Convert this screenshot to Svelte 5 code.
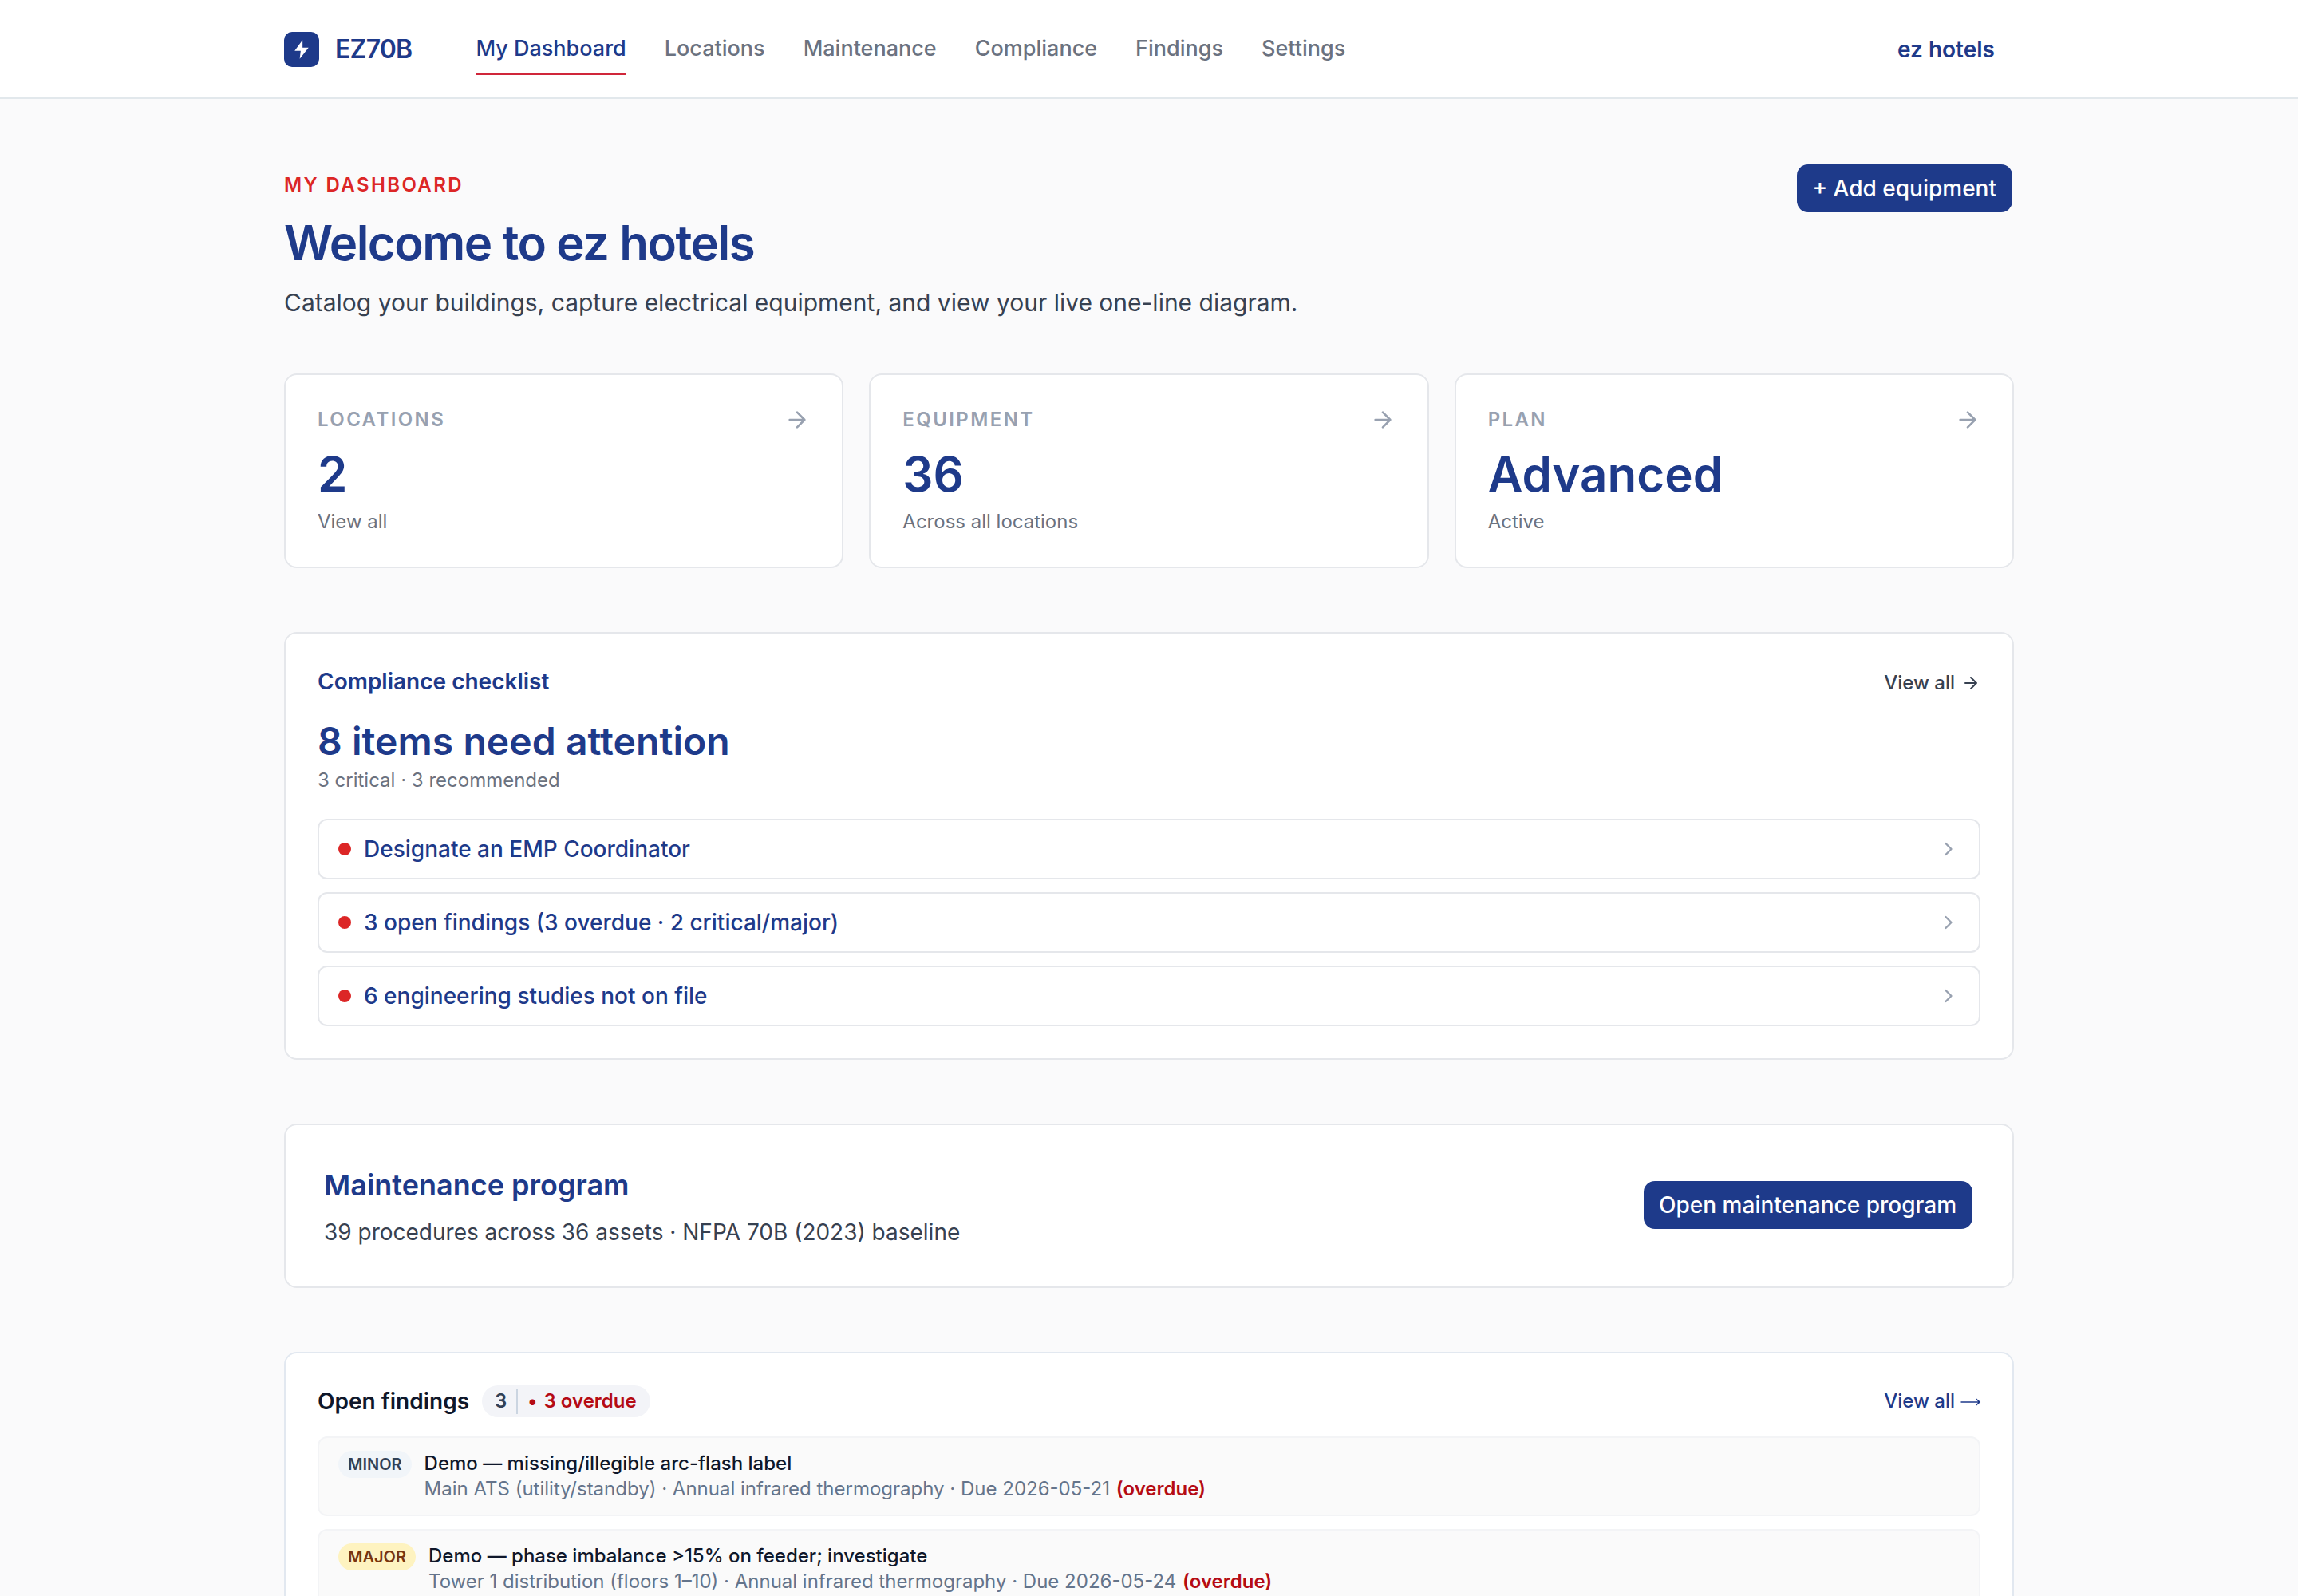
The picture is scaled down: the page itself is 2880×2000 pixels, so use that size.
<script>
  const nav = ["My Dashboard", "Locations", "Maintenance", "Compliance", "Findings", "Settings"];
  let active = $state("My Dashboard");

  const stats = [
    { label: "Locations", value: "2", note: "View all" },
    { label: "Equipment", value: "36", note: "Across all locations" },
    { label: "Plan", value: "Advanced", note: "Active" },
  ];

  const checklist = [
    "Designate an EMP Coordinator",
    "3 open findings (3 overdue · 2 critical/major)",
    "6 engineering studies not on file",
  ];

  const findings = [
    {
      severity: "minor",
      title: "Demo — missing/illegible arc-flash label",
      detail: "Main ATS (utility/standby) · Annual infrared thermography · Due 2026-05-21",
    },
    {
      severity: "major",
      title: "Demo — phase imbalance >15% on feeder; investigate",
      detail: "Tower 1 distribution (floors 1–10) · Annual infrared thermography · Due 2026-05-24",
    },
  ];
</script>

{#snippet arrow(size)}
  <svg class="icon" width={size} height={size} viewBox="0 0 24 24">
    <path d="M5 12h14M12 5l7 7-7 7" />
  </svg>
{/snippet}

<div class="app">
  <header>
    <div class="bar">
      <div class="brand">
        <span class="logo">
          <svg width="28" height="28" viewBox="0 0 24 24">
            <path d="M13 2 4.5 13.5H11L10 22l9.5-12H13z" />
          </svg>
        </span>
        EZ70B
      </div>
      <nav>
        {#each nav as item}
          <button class:active={item === active} onclick={() => (active = item)}>{item}</button>
        {/each}
      </nav>
      <div class="account">ez hotels</div>
    </div>
  </header>

  <main>
    <section class="intro">
      <div>
        <p class="eyebrow">My Dashboard</p>
        <h1>Welcome to ez hotels</h1>
        <p class="lead">
          Catalog your buildings, capture electrical equipment, and view your live one-line diagram.
        </p>
      </div>
      <button class="btn">+ Add equipment</button>
    </section>

    <section class="stats">
      {#each stats as stat}
        <div class="card stat">
          <div class="row">
            <span class="label">{stat.label}</span>
            {@render arrow(32)}
          </div>
          <div class="value">{stat.value}</div>
          <div class="note">{stat.note}</div>
        </div>
      {/each}
    </section>

    <section class="card compliance">
      <div class="row">
        <h3>Compliance checklist</h3>
        <span class="view">View all {@render arrow(24)}</span>
      </div>
      <div class="headline">8 items need attention</div>
      <div class="note">3 critical · 3 recommended</div>
      <ul>
        {#each checklist as item}
          <li>
            <span class="dot"></span>
            <span class="text">{item}</span>
            <svg class="icon" width="28" height="28" viewBox="0 0 24 24"><path d="m9 18 6-6-6-6" /></svg>
          </li>
        {/each}
      </ul>
    </section>

    <section class="card program">
      <div>
        <h2>Maintenance program</h2>
        <p>39 procedures across 36 assets · NFPA 70B (2023) baseline</p>
      </div>
      <button class="btn">Open maintenance program</button>
    </section>

    <section class="card findings">
      <div class="row">
        <h3>Open findings</h3>
        <span class="pill">
          <span class="count">3</span>
          <span class="late"><span class="bullet">•</span> 3 overdue</span>
        </span>
        <span class="view">
          View all
          <svg class="long" width="24" height="24" viewBox="0 0 24 24">
            <path d="M-.5 13H23M18.5 9l4.5 4-4.5 4" />
          </svg>
        </span>
      </div>
      <ul>
        {#each findings as finding}
          <li>
            <span class="badge {finding.severity}">{finding.severity}</span>
            <div>
              <div class="title">{finding.title}</div>
              <div class="detail">{finding.detail} <b>(overdue)</b></div>
            </div>
          </li>
        {/each}
      </ul>
    </section>
  </main>
</div>

<style>
  :global(body) {
    background: #fafafb;
  }

  .app {
    height: 2000px;
    overflow: hidden;
    font-family: Inter, sans-serif;
    font-size: 28px;
    line-height: 40px;
    color: #1e3a8a;
  }

  h1,
  h2,
  h3,
  p,
  ul {
    margin: 0;
    padding: 0;
    list-style: none;
  }

  button {
    font: inherit;
    border: 0;
    background: none;
    padding: 0;
    cursor: pointer;
  }

  header {
    background: #fff;
    border-bottom: 2px solid #e2e8ec;
  }

  .bar,
  main {
    width: 2168px;
    margin: 0 auto;
  }

  .bar {
    height: 120px;
    padding-top: 2px;
    display: flex;
    align-items: center;
  }

  .brand {
    display: flex;
    align-items: center;
    gap: 20px;
    font-size: 32px;
    font-weight: 600;
    letter-spacing: -0.025em;
  }

  .logo {
    width: 44px;
    height: 44px;
    border-radius: 10px;
    background: #1e3a8a;
    display: grid;
    place-items: center;
  }

  .logo path {
    fill: #fff;
  }

  nav {
    display: flex;
    gap: 48px;
    margin: 0 0 2px 80px;
  }

  nav button {
    font-size: 27px;
    font-weight: 500;
    color: #6b7280;
    padding: 13px 0 11px;
    border-bottom: 2px solid transparent;
  }

  nav button.active {
    color: #1e3a8a;
    border-color: #d0263a;
  }

  .account {
    margin-left: auto;
    padding-right: 24px;
    font-weight: 600;
  }

  main {
    padding-top: 80px;
    display: flex;
    flex-direction: column;
    gap: 80px;
  }

  .intro {
    display: flex;
    justify-content: space-between;
    align-items: flex-start;
    margin-bottom: -15px;
  }

  .eyebrow {
    margin-top: 12px;
    font-size: 24px;
    line-height: 32px;
    font-weight: 600;
    letter-spacing: 0.1em;
    text-transform: uppercase;
    color: #dc2626;
  }

  h1 {
    margin-top: 16px;
    font-size: 60px;
    line-height: 80px;
    font-weight: 600;
    letter-spacing: -0.025em;
  }

  .lead {
    margin-top: 11px;
    font-size: 30px;
    line-height: 48px;
    color: #374151;
  }

  .btn {
    height: 64px;
    padding: 0 20px 0 19px;
    border: 2px solid transparent;
    border-radius: 16px;
    background: #1e3a8a;
    background-clip: padding-box;
    color: #fff;
    font-weight: 500;
  }

  .card {
    background: #fff;
    border: 2px solid #e5e7eb;
    border-radius: 16px;
    padding: 40px;
  }

  .row {
    display: flex;
    align-items: center;
  }

  .icon {
    display: block;
    fill: none;
    stroke: #98a1b0;
    stroke-width: 2;
    stroke-linecap: round;
    stroke-linejoin: round;
  }

  .stats {
    display: grid;
    grid-template-columns: repeat(3, 1fr);
    gap: 32px;
  }

  .stat {
    height: 160px;
  }

  .stat .row {
    justify-content: space-between;
    height: 32px;
  }

  .label {
    font-size: 24px;
    line-height: 32px;
    font-weight: 600;
    letter-spacing: 0.1em;
    text-transform: uppercase;
    color: #98a1b0;
  }

  .value {
    margin-top: 16px;
    font-size: 60px;
    line-height: 72px;
    font-weight: 600;
  }

  .note {
    font-size: 24px;
    line-height: 32px;
    color: #6b7280;
  }

  .stat .note {
    margin-top: 8px;
  }

  h3 {
    font-size: 28px;
    font-weight: 600;
  }

  .view {
    margin-left: auto;
    display: flex;
    align-items: center;
    gap: 8px;
    font-size: 24px;
    line-height: 32px;
    font-weight: 500;
  }

  .compliance .view {
    margin-top: 4px;
    color: #374151;
  }

  .view .icon {
    stroke: #374151;
  }

  .long {
    overflow: visible;
    fill: none;
    stroke: #1e3a8a;
    stroke-width: 1.6;
  }

  .headline {
    margin-top: 23px;
    margin-bottom: 1px;
    font-size: 48px;
    line-height: 64px;
    font-weight: 600;
    letter-spacing: 0.06px;
  }

  .compliance ul {
    margin-top: 32px;
  }

  ul {
    display: flex;
    flex-direction: column;
    gap: 16px;
  }

  .compliance li {
    height: 72px;
    display: flex;
    align-items: center;
    gap: 16px;
    padding: 0 24px;
    border: 2px solid #e5e7eb;
    border-radius: 12px;
    font-weight: 500;
  }

  .dot {
    width: 16px;
    height: 16px;
    border-radius: 50%;
    background: #dc2626;
  }

  .text {
    flex: 1;
  }

  .program {
    height: 106px;
    padding: 48px;
    display: flex;
    align-items: center;
    justify-content: space-between;
  }

  .program .btn {
    margin-bottom: 2px;
  }

  h2 {
    font-size: 36px;
    line-height: 52px;
    font-weight: 600;
  }

  .program p {
    margin-top: 13px;
    color: #374151;
  }

  .findings {
    border-color: #e2e8f0;
  }

  .findings h3 {
    color: #0f172a;
  }

  .pill {
    margin-left: 16px;
    height: 32px;
    padding: 4px 17px 4px 16px;
    display: flex;
    border-radius: 20px;
    background: #f3f4f8;
    font-size: 24px;
    line-height: 32px;
    font-weight: 600;
  }

  .count {
    padding-right: 12px;
    border-right: 2px solid #cbd5e1;
    color: #334155;
  }

  .late {
    padding-left: 12px;
    color: #b50b14;
  }

  .bullet {
    margin-right: 2px;
  }

  .findings ul {
    margin-top: 24px;
  }

  .findings li {
    display: flex;
    align-items: flex-start;
    gap: 16px;
    padding: 16px 24px;
    border: 2px solid #f3f4f6;
    border-radius: 12px;
    background: #fafafa;
    font-size: 24px;
    line-height: 32px;
  }

  .badge {
    padding: 0 12px;
    border-radius: 17px;
    font-size: 20px;
    line-height: 34px;
    font-weight: 600;
    text-transform: uppercase;
  }

  .minor {
    background: #f1f5f9;
    color: #334155;
  }

  .major {
    background: #fef3c0;
    color: #78350f;
  }

  .title {
    font-weight: 500;
    color: #0f172a;
  }

  .detail {
    color: #64748b;
  }

  .detail b {
    margin-left: 1px;
    font-weight: 600;
    color: #b50b14;
  }
</style>
